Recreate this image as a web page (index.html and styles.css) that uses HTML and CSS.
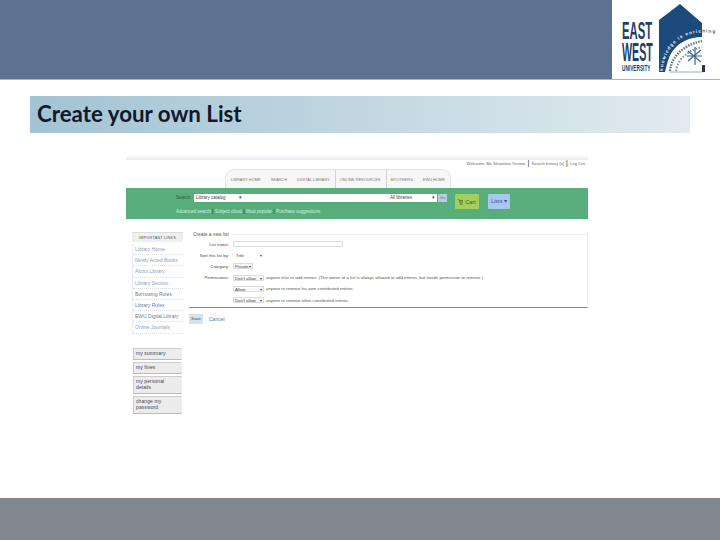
FILE: index.html
```html
<!DOCTYPE html>
<html lang="en">
<head>
<meta charset="utf-8">
<title>Create your own List</title>
<link rel="stylesheet" href="styles.css">
</head>
<body>
<div class="slide">
  <header class="top">
    <div class="top-fill"></div>
    <div class="logo">
      <div class="logo-word">
        <span class="w1">EAST</span>
        <span class="w1 w1b">WEST</span>
        <span class="w2">UNIVERSITY</span>
      </div>
      <svg class="logo-mark" width="65" height="78" viewBox="0 0 65 78">
        <path d="M4 20 L25 4 L47 23 L47 37 C34 37 20 43 14 58 C12 63 11 68 10 72 L4 72 Z" fill="#1d4a7c"/>
        <path id="arc" d="M7.5 71 C9 52 22 33 47 32.500 L64 33" fill="none"/>
        <text class="arc-text"><textPath href="#arc"><tspan fill="#e6edf3">knowledge is enric</tspan><tspan fill="#4a5a6c">hing</tspan></textPath></text>
        <path d="M15 71 C16 60 24 46 47 41" fill="none" stroke="#5f748a" stroke-width="2.400" stroke-dasharray="1.500 1.200"/>
        <path d="M21 71 C22 63 28 52 47 47" fill="none" stroke="#8496a8" stroke-width="2.200" stroke-dasharray="1.500 1.600"/>
        <path d="M33 61 L46 50 M33 51 L46 62 M40 47 L40 65 M32 56 L47 56" stroke="#3a6690" stroke-width="1.200"/>
        <path d="M14 72 H48" stroke="#8a97a4" stroke-width=".8"/>
        <path d="M47 65 H50 V72 H47 Z" fill="#24384f"/>
      </svg>
    </div>
  </header>

  <h1 class="title">Create your own List</h1>

  <section class="shot">
    <div class="shot-strip"></div>
    <div class="shot-user">Welcome, Ms Shamima Yesmin <b>|</b> Search history [x] <b>|</b> Log Out</div>
    <nav class="shot-nav">
      <span>LIBRARY HOME</span><span>SEARCH</span><span>DIGITAL LIBRARY</span><span class="sep">ONLINE RESOURCES</span><span class="sep">MYOTHERS</span><span>EWU HOME</span>
    </nav>
    <div class="shot-green">
      <div class="search-row">
        <span class="search-label">Search:</span>
        <span class="select s-cat">Library catalog<i>▾</i></span>
        <span class="search-input"></span>
        <span class="select s-lib">All libraries<i>▾</i></span>
        <span class="go">Go</span>
        <span class="cart">
          <svg class="cart-icon" width="5" height="6" viewBox="0 0 5 6"><path d="M0 .5 H1 L2 4 H4.500 M1.300 1.500 H5 L4.400 3 H1.800" fill="none" stroke="#4d6f2a" stroke-width=".7"/><circle cx="2.200" cy="5.200" r=".6" fill="#4d6f2a"/><circle cx="4" cy="5.200" r=".6" fill="#4d6f2a"/></svg>
          Cart
        </span>
        <span class="lists">Lists ▾</span>
      </div>
      <div class="search-links">Advanced search <b>|</b> Subject cloud <b>|</b> Most popular <b>|</b> Purchase suggestions</div>
    </div>
    <div class="shot-main">
      <aside class="side">
        <div class="side-head">IMPORTANT LINKS</div>
        <ul class="side-links">
          <li>Library Home</li>
          <li>Newly Acted Books</li>
          <li>About Library</li>
          <li>Library Section</li>
          <li class="dark">Borrowing Rules</li>
          <li class="dark">Library Rules</li>
          <li class="dark">EWU Digital Library</li>
          <li>Online Journals</li>
        </ul>
        <div class="side-tab">my summary</div>
        <div class="side-tab">my fines</div>
        <div class="side-tab tall">my personal details</div>
        <div class="side-tab tall">change my password</div>
      </aside>
      <div class="form-col">
        <div class="fieldset">
          <div class="legend">Create a new list</div>
          <div class="frow"><label class="req">List name:</label><span class="text-input"></span></div>
          <div class="frow"><label>Sort this list by:</label><span class="sel sel-sort">Title<i>▾</i></span></div>
          <div class="frow"><label>Category:</label><span class="sel sel-cat">Private<i>▾</i></span></div>
          <div class="frow"><label>Permissions:</label><span class="sel">Don't allow<i>▾</i></span><span class="note">anyone else to add entries. (The owner of a list is always allowed to add entries, but needs permission to remove.)</span></div>
          <div class="frow"><label></label><span class="sel">Allow<i>▾</i></span><span class="note">anyone to remove his own contributed entries.</span></div>
          <div class="frow"><label></label><span class="sel">Don't allow<i>▾</i></span><span class="note">anyone to remove other contributed entries.</span></div>
        </div>
        <div class="actions"><span class="save">Save</span><span class="cancel">Cancel</span></div>
      </div>
    </div>
  </section>

  <footer class="bottom"></footer>
</div>
</body>
</html>
```

FILE: styles.css
```css
* { box-sizing: border-box; }
html, body { margin: 0; padding: 0; }
body { width: 720px; height: 540px; overflow: hidden; background: #fff; font-family: "Liberation Sans", Arial, sans-serif; }
.slide { width: 720px; height: 540px; display: flex; flex-direction: column; }

.top { height: 80px; display: flex; flex: none; border-bottom: 1px solid #a9b5c4; }
.top-fill { flex: 1; background: #5b7292; }
.logo { width: 108px; background: #fff; display: flex; align-items: flex-start; padding-left: 10px; gap: 1px; }
.logo-word { display: flex; flex-direction: column; width: 32px; padding-top: 20px; color: #1e3f66; font-weight: 700; flex: none; }
.w1 { display: block; font-size: 24px; line-height: 21px; transform: scaleX(.47); transform-origin: left center; white-space: nowrap; }
.w1b { font-size: 26px; line-height: 22px; transform: scaleX(.41); }
.w2 { display: block; font-size: 9.500px; line-height: 9px; transform: scaleX(.5); transform-origin: left center; white-space: nowrap; }
.logo-mark { flex: none; }
.arc-text { font-size: 4.600px; font-weight: 700; letter-spacing: 1.100px; }

.title { flex: none; margin: 16px 30px 0; height: 37px; padding: 0 7px; font-family: "Lato", sans-serif; font-weight: 700; font-size: 22.300px; line-height: 36px; color: #10182a; background: linear-gradient(90deg, #a2c3d3, #e2ebf0); }

.shot { flex: none; height: 343px; margin: 22px 132px 0 126px; color: #666; font-size: 4.600px; overflow: hidden; }
.shot-strip { height: 5px; background: linear-gradient(180deg, #fff, #e6ebf1); }
.shot-user { text-align: right; height: 9px; line-height: 6px; padding-right: 3px; color: #667; font-size: 4.200px; }
.shot-user b { color: #222; font-size: 7px; font-weight: 400; margin: 0 1px; }
.shot-nav { height: 19px; margin-left: 99px; width: 226px; display: flex; align-items: center; gap: 10px; padding-left: 5px; background: #f6f6f6; border: 1px solid #e4e4e4; border-bottom: 0; border-radius: 9px 9px 0 0; font-size: 3.950px; color: #777; white-space: nowrap; }
.shot-nav .sep { display: flex; align-items: center; align-self: stretch; border-left: 1px solid #d4d4d4; padding-left: 4px; margin-left: -5px; }
.shot-green { height: 31px; background: #57ae7b; padding: 6px 0 0 50px; color: #d9efdf; font-size: 4.500px; }
.search-row { display: flex; align-items: flex-start; height: 15px; }
.search-label { width: 18px; color: #2a5a40; line-height: 8px; }
.select { height: 8px; line-height: 8px; background: #fff; color: #444; display: flex; justify-content: space-between; padding: 0 2px; }
.select i { font-style: normal; }
.s-cat { width: 50px; }
.search-input { width: 144px; height: 8px; background: #fff; }
.s-lib { width: 49px; }
.go { width: 9px; height: 8px; margin-left: 1px; background: #b8cde0; color: #678; text-align: center; line-height: 8px; font-size: 4px; }
.cart { display: flex; align-items: center; justify-content: center; gap: 2px; width: 24px; height: 15px; margin-left: 8px; background: #a5cf5c; color: #385a1e; border-radius: 1px; font-size: 5.500px; white-space: nowrap; }
.cart-icon { flex: none; }
.lists { width: 22px; height: 15px; margin-left: 9px; background: #a9c8f0; color: #2b5a9c; border-radius: 1px; text-align: center; line-height: 15px; font-size: 5.500px; }
.search-links { margin-top: -1px; line-height: 7px; }
.search-links b { color: #333; font-weight: 400; font-size: 6px; }

.shot-main { display: flex; padding: 13px 0 0 6px; }
.side { width: 51px; flex: none; }
.side-head { height: 10px; background: #efefef; border-top: 1px solid #ddd; text-align: center; line-height: 10px; font-size: 3.800px; color: #555; letter-spacing: .2px; }
.side-links { list-style: none; margin: 2px 0 14px; padding: 0; border-left: 1px solid #eee; }
.side-links li { height: 11.200px; line-height: 11px; padding-left: 2px; font-size: 5px; color: #8aa3bb; border-bottom: 1px dotted #ddd; white-space: nowrap; }
.side-links li.dark { color: #5f7f9f; }
.side-tab { width: 49px; height: 12px; margin: 0 0 2px 1px; padding: 1px 1px 0 2px; background: #ececec; border: 1px solid #ccc; border-right-color: #eee; border-bottom-color: #bbb; font-size: 5px; line-height: 6.500px; letter-spacing: .1px; color: #445; }
.side-tab.tall { height: 18px; padding-right: 12px; }

.form-col { flex: 1; padding-left: 6px; min-width: 0; }
.fieldset { position: relative; height: 76px; border-right: 1px solid #eee; border-bottom: 1px solid #888; }
.fieldset::before { content: ""; position: absolute; left: 42px; right: 0; top: 2px; border-top: 1px solid #eee; }
.legend { height: 6px; padding-left: 4px; line-height: 5px; font-size: 4.800px; color: #555; }
.frow { display: flex; align-items: center; height: 11.200px; white-space: nowrap; font-size: 4.300px; }
.frow:nth-child(2) { margin-top: .5px; }
.frow label { width: 40px; text-align: right; color: #444; flex: none; }
.frow label.req { color: #8c2b2b; }
.text-input { width: 110px; height: 6px; margin-left: 4px; background: #fff; border: 1px solid #ddd; }
.sel { display: flex; justify-content: space-between; height: 6px; line-height: 5px; margin-left: 4px; width: 31px; padding: 0 1px; background: #f8f8f8; border: 1px solid #ddd; color: #444; flex: none; }
.sel i { font-style: normal; }
.sel-sort { background: #fff; border-color: #fff; padding-left: 2px; }
.sel-cat { width: 20px; }
.note { margin-left: 2px; color: #555; }
.actions { display: flex; align-items: center; height: 11px; margin-top: 5px; gap: 6px; font-size: 5px; }
.save { width: 14px; height: 10px; background: #d9e2ec; color: #356; text-align: center; line-height: 10px; font-size: 4.400px; }
.cancel { color: #4d7aa5; }

.bottom { flex: none; margin-top: auto; height: 42px; background: #7f878f; }
```
